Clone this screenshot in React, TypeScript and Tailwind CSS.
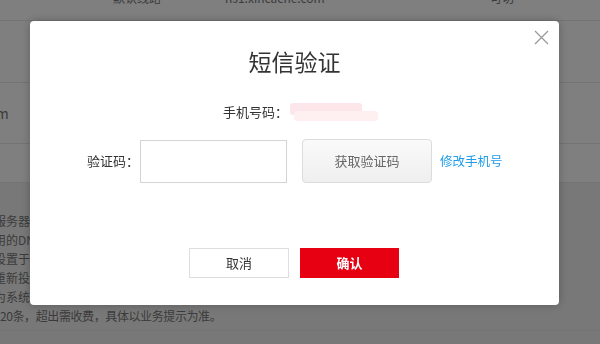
const cjk = { fontFamily: '"Microsoft YaHei", "Noto Sans CJK SC", "Liberation Sans", sans-serif' };

function PageBehind() {
  return (
    <div className="w-[600px] h-[344px] overflow-hidden bg-white text-[12px] text-[#777]" style={cjk}>
      <div className="-mt-[24px]">
        {/* table rows */}
        <div className="h-[45px] flex items-center border-b border-[#e8e8e8]">
          <span className="ml-[113px] w-[112px]">默认线路</span>
          <span className="w-[265px]">ns1.xincache.com</span>
          <span>可切</span>
        </div>
        <div className="h-[62px] border-b border-[#e8e8e8]" />
        <div className="h-[61px] flex items-center border-b border-[#e8e8e8] whitespace-nowrap">
          <span className="-ml-[44px] text-[14px]">xxx.com</span>
        </div>
        <div className="h-[39px] border-b border-[#e8e8e8]" />
      </div>
      {/* notes block */}
      <div className="bg-[#f0f0f0] h-[148px] border-b border-[#e8e8e8] pt-[28px] -ml-[6px] leading-[19px] whitespace-nowrap">
        <div>服务器显示当前解析状态</div>
        <div>用的DNS服务器地址</div>
        <div>设置于您的域名注册商</div>
        <div>重新投入使用时生效</div>
        <div>为系统默认线路</div>
        <div className="ml-[6px] tracking-[-0.4px]">20条，超出需收费，具体以业务提示为准。</div>
      </div>
      <div className="bg-[#f0f0f0] h-[20px]" />
    </div>
  );
}

function SmsModal() {
  return (
    <div className="relative w-[529px] h-[284px] bg-white rounded-[4px] shadow-[0_0_10px_rgba(0,0,0,0.25)] pt-[24px]" style={cjk}>
      <button className="absolute top-[9px] right-[10px] w-[15px] h-[15px]" aria-label="关闭">
        <svg viewBox="0 0 15 15" className="w-[15px] h-[15px]">
          <path d="M1 1L14 14M14 1L1 14" stroke="#9a9a9a" strokeWidth="1.3" fill="none" />
        </svg>
      </button>

      <div className="h-[32px] leading-[32px] text-center text-[23px] text-[#333]">短信验证</div>

      {/* phone */}
      <div className="mt-[25px] h-[20px] flex items-center text-[13px] text-[#333]">
        <span className="ml-[193px]">手机号码：</span>
        <span className="relative ml-[2px] w-[88px] h-[18px]">
          <span className="absolute left-[0px] top-[0px] w-[72px] h-[12px] rounded-[3px] bg-[#fde6ea]" />
          <span className="absolute left-[4px] top-[8px] w-[84px] h-[10px] rounded-[3px] bg-[#fef0f1]" />
        </span>
      </div>

      {/* code */}
      <div className="mt-[17px] h-[44px] flex items-center text-[13px]">
        <span className="ml-[57px] w-[53px] text-[#333]">验证码：</span>
        <input className="w-[147px] h-[43px] border border-[#d4d4d4] outline-none px-2" />
        <button className="ml-[15px] w-[130px] h-[44px] rounded-[4px] border border-[#dcdcdc] bg-gradient-to-b from-[#fafafa] to-[#efefef] text-[#666]">
          获取验证码
        </button>
        <a className="ml-[8px] text-[#1e9be9] text-[12.5px] cursor-pointer">修改手机号</a>
      </div>

      {/* actions */}
      <div className="mt-[65px] flex text-[13px]">
        <button className="ml-[159px] w-[100px] h-[30px] border border-[#dedede] bg-white text-[#333]">取消</button>
        <button className="ml-[11px] w-[99px] h-[30px] bg-[#e60012] text-white font-bold">确认</button>
      </div>
    </div>
  );
}

export default function App() {
  return (
    <div className="relative w-[600px] h-[344px] overflow-hidden">
      <PageBehind />
      <div className="fixed inset-0 bg-black/50 pl-[30px] pt-[21px]">
        <SmsModal />
      </div>
    </div>
  );
}
